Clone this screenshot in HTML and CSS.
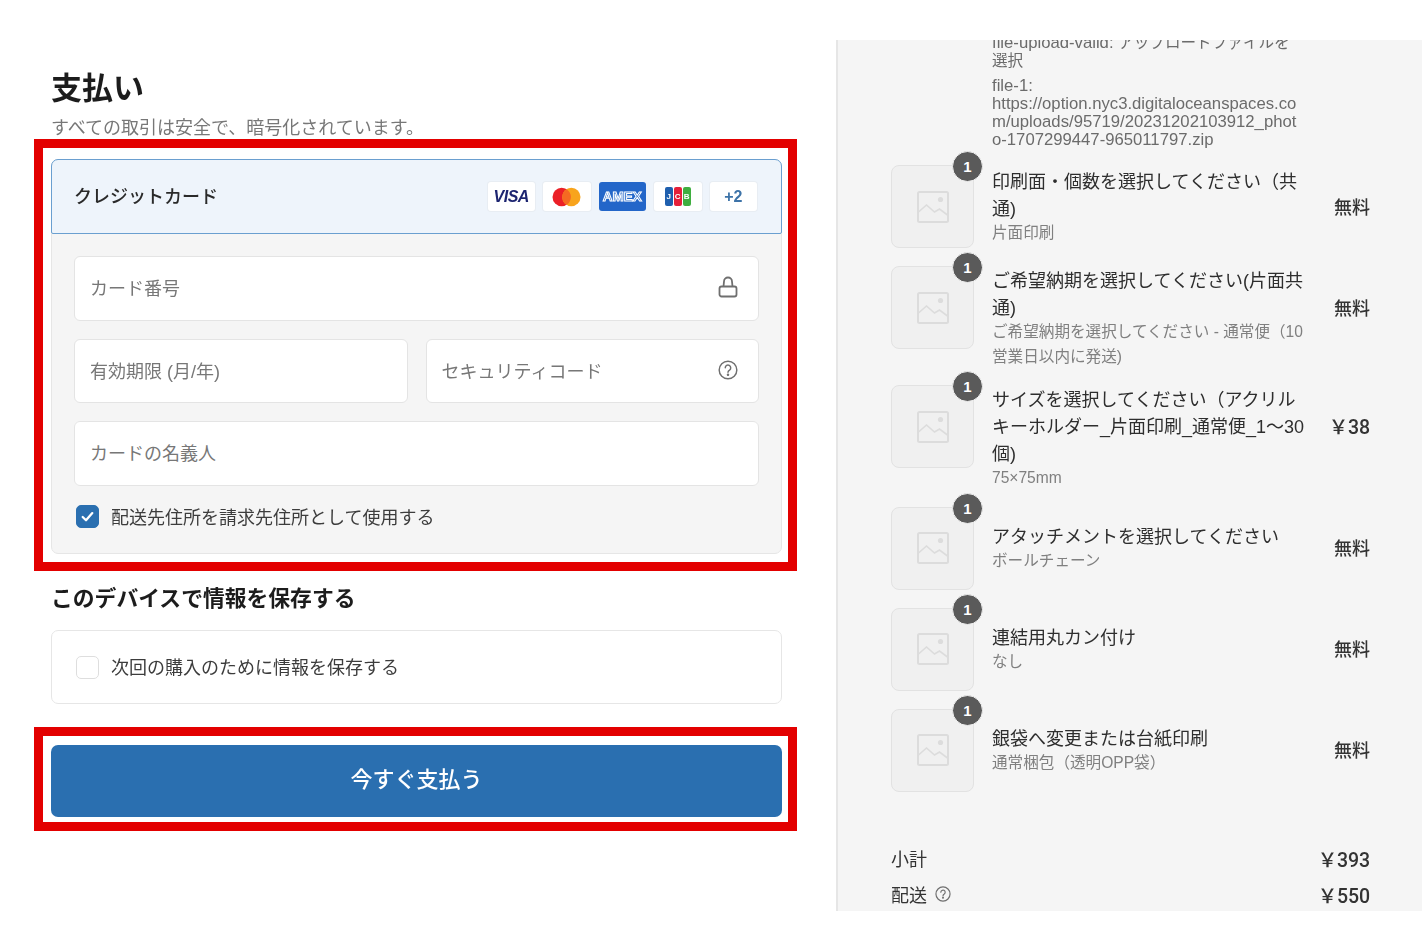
FILE: index.html
```html
<!DOCTYPE html>
<html lang="ja">
<head>
<meta charset="utf-8">
<title>支払い</title>
<link rel="stylesheet" href="styles.css">
</head>
<body>
<div class="page">
  <main class="checkout">
    <h1 class="title">支払い</h1>
    <p class="subtitle">すべての取引は安全で、暗号化されています。</p>

    <div class="highlight highlight-card">
      <section class="panel">
        <header class="panel-head">
          <span class="panel-name">クレジットカード</span>
          <div class="brands">
            <span class="brand"><span class="visa">VISA</span></span>
            <span class="brand">
              <svg class="mc" viewBox="0 0 30 20"><circle cx="10" cy="10" r="9.5" fill="#eb2027"/><circle cx="20" cy="10" r="9.5" fill="#f8a41c"/><path d="M15 1.9a9.5 9.5 0 0 1 0 16.2a9.5 9.5 0 0 1 0-16.2z" fill="#f56a22"/></svg>
            </span>
            <span class="brand brand-amex"><span class="amex">AMEX</span></span>
            <span class="brand">
              <span class="jcb"><i class="jcb-j">J</i><i class="jcb-c">C</i><i class="jcb-b">B</i></span>
            </span>
            <span class="brand brand-more">+2</span>
          </div>
        </header>
        <div class="panel-body">
          <div class="field">
            <span class="placeholder">カード番号</span>
            <svg class="field-icon" viewBox="0 0 20 22" fill="none" stroke="#6f6f6f" stroke-width="1.8"><path d="M5.5 10.5L6 5.5a4 4 0 0 1 8 0l.5 5"/><rect x="1.5" y="10.5" width="17" height="10" rx="2"/></svg>
          </div>
          <div class="field-row">
            <div class="field"><span class="placeholder">有効期限 (月/年)</span></div>
            <div class="field">
              <span class="placeholder">セキュリティコード</span>
              <svg class="field-icon" viewBox="0 0 22 22" fill="none" stroke="#6f6f6f" stroke-width="1.6"><circle cx="11" cy="11" r="9.7"/><path d="M8 8.6a3 3 0 1 1 4.7 2.5c-1.1.7-1.7 1.3-1.7 2.5" stroke-linecap="round"/><circle cx="11" cy="16.3" r=".6" fill="#6f6f6f"/></svg>
            </div>
          </div>
          <div class="field"><span class="placeholder">カードの名義人</span></div>
          <label class="check-row">
            <span class="check check-on">
              <svg viewBox="0 0 24 24" fill="none" stroke="#fff" stroke-width="2.6" stroke-linecap="round" stroke-linejoin="round"><path d="M6.5 12.5l3.8 3.8 7.2-8.2"/></svg>
            </span>
            <span class="check-text">配送先住所を請求先住所として使用する</span>
          </label>
        </div>
      </section>
    </div>

    <h2 class="section-title">このデバイスで情報を保存する</h2>
    <label class="save-box">
      <span class="check"></span>
      <span class="check-text">次回の購入のために情報を保存する</span>
    </label>

    <div class="highlight highlight-button">
      <button class="pay" type="button">今すぐ支払う</button>
    </div>
  </main>

  <aside class="summary">
    <div class="upload-meta">
      <p>file-upload-valid: <span class="meta-ja">アップロードファイルを選択</span></p>
      <p>file-1:<br>https://option.nyc3.digitaloceanspaces.com/uploads/95719/20231202103912_photo-1707299447-965011797.zip</p>
    </div>

    <ul class="items">
      <li class="item">
        <div class="thumb"><svg class="thumb-icon" viewBox="0 0 32 32"><use href="#ph"/></svg><span class="badge">1</span></div>
        <div class="item-text"><div class="item-name">印刷面・個数を選択してください&#xFF08;共通)</div><div class="item-sub">片面印刷</div></div>
        <div class="item-price">無料</div>
      </li>
      <li class="item">
        <div class="thumb"><svg class="thumb-icon" viewBox="0 0 32 32"><use href="#ph"/></svg><span class="badge">1</span></div>
        <div class="item-text"><div class="item-name">ご希望納期を選択してください(片面共通)</div><div class="item-sub">ご希望納期を選択してください - 通常便&#xFF08;10営業日以内に発送)</div></div>
        <div class="item-price">無料</div>
      </li>
      <li class="item">
        <div class="thumb"><svg class="thumb-icon" viewBox="0 0 32 32"><use href="#ph"/></svg><span class="badge">1</span></div>
        <div class="item-text"><div class="item-name">サイズを選択してください&#xFF08;アクリルキーホルダー_片面印刷_通常便_1〜30個)</div><div class="item-sub">75×75mm</div></div>
        <div class="item-price item-price-amount">&#xFFE5;38</div>
      </li>
      <li class="item">
        <div class="thumb"><svg class="thumb-icon" viewBox="0 0 32 32"><use href="#ph"/></svg><span class="badge">1</span></div>
        <div class="item-text"><div class="item-name">アタッチメントを選択してください</div><div class="item-sub">ボールチェーン</div></div>
        <div class="item-price">無料</div>
      </li>
      <li class="item">
        <div class="thumb"><svg class="thumb-icon" viewBox="0 0 32 32"><use href="#ph"/></svg><span class="badge">1</span></div>
        <div class="item-text"><div class="item-name">連結用丸カン付け</div><div class="item-sub">なし</div></div>
        <div class="item-price">無料</div>
      </li>
      <li class="item">
        <div class="thumb"><svg class="thumb-icon" viewBox="0 0 32 32"><use href="#ph"/></svg><span class="badge">1</span></div>
        <div class="item-text"><div class="item-name">銀袋へ変更または台紙印刷</div><div class="item-sub">通常梱包&#xFF08;透明OPP袋&#xFF09;</div></div>
        <div class="item-price">無料</div>
      </li>
    </ul>

    <dl class="totals">
      <div class="total-row"><dt>小計</dt><dd>&#xFFE5;393</dd></div>
      <div class="total-row"><dt>配送
        <svg class="total-help" viewBox="0 0 22 22" fill="none" stroke="#6f6f6f" stroke-width="1.6"><circle cx="11" cy="11" r="9.7"/><path d="M8 8.6a3 3 0 1 1 4.7 2.5c-1.1.7-1.7 1.3-1.7 2.5" stroke-linecap="round"/><circle cx="11" cy="16.3" r=".6" fill="#6f6f6f"/></svg>
      </dt><dd>&#xFFE5;550</dd></div>
    </dl>
  </aside>
</div>

<svg class="sprite" aria-hidden="true">
  <symbol id="ph" viewBox="0 0 32 32">
    <rect x="1" y="1" width="30" height="30" rx="1.5" fill="none" stroke="#dcdcdc" stroke-width="2"/>
    <path d="M1.5 21l8-7 8 7 5-3 8 6" fill="none" stroke="#dcdcdc" stroke-width="1.6"/>
    <circle cx="23.5" cy="8.5" r="2.6" fill="#dcdcdc"/>
  </symbol>
</svg>
</body>
</html>
```

FILE: styles.css
```css
* { box-sizing: border-box; }

html, body { margin: 0; padding: 0; }

body {
  background: #fff;
  color: #2a2a2a;
  font-family: "Liberation Sans", "Noto Sans CJK JP", sans-serif;
}

.sprite { display: none; }

.page {
  display: grid;
  grid-template-columns: 836px 586px;
  width: 1422px;
  height: 952px;
  overflow: hidden;
  filter: blur(0.35px);
}

/* left column */
.checkout { padding: 69px 0 0 34px; }

.title {
  margin: 0 0 0 17px;
  font-size: 31px;
  line-height: 40px;
  font-weight: 700;
  color: #1c1c1c;
}

.subtitle {
  margin: 8px 0 0 17px;
  font-size: 18px;
  line-height: 22px;
  color: #777;
}

.highlight {
  width: 763px;
  border: 9px solid #e30000;
}

.highlight-card { padding: 11px 6px 8px 8px; }

.highlight-button { margin-top: 23px; padding: 9px 6px 5px 8px; }

.panel {
  background: #f5f5f5;
  border: 1px solid #e6e6e6;
  border-radius: 7px;
}

.panel-head {
  display: flex;
  align-items: center;
  justify-content: space-between;
  height: 75px;
  margin: -1px -1px 0;
  padding: 0 24px 0 22px;
  background: #eef4fb;
  border: 1.5px solid #6a9fd0;
  border-radius: 7px 7px 2px 2px;
}

.panel-name { padding-bottom: 4px; font-size: 18px; font-weight: 500; color: #2a2a2a; }

.brands { display: flex; gap: 8px; }

.brand {
  display: flex;
  align-items: center;
  justify-content: center;
  width: 47.5px;
  height: 29px;
  background: #fff;
  border-radius: 3px;
  box-shadow: 0 0 0 1px #e8edf3;
}

.brand-amex { background: #2366c9; box-shadow: none; }

.brand-more { font-size: 16px; font-weight: 700; color: #3d73a8; }

.visa {
  font-size: 16px;
  font-weight: 700;
  font-style: italic;
  letter-spacing: -0.5px;
  color: #1c2470;
}

.amex {
  font-size: 13.5px;
  font-weight: 700;
  color: #2366c9;
  -webkit-text-stroke: 1px #fff;
}

.mc { width: 29px; height: 20px; }

.jcb { display: flex; gap: 1px; }

.jcb i {
  display: block;
  width: 8px;
  height: 19px;
  border-radius: 2px;
  font-size: 8px;
  font-weight: 700;
  font-style: normal;
  line-height: 19px;
  text-align: center;
  color: #fff;
}

.jcb-j { background: #1f5fae; }
.jcb-c { background: #e5203a; }
.jcb-b { background: #3fae3f; }

.panel-body {
  display: flex;
  flex-direction: column;
  gap: 18px;
  height: 319px;
  padding: 22px 22px 0;
}

.field {
  display: flex;
  align-items: center;
  justify-content: space-between;
  height: 64.5px;
  padding: 0 20px 2px 15px;
  background: #fff;
  border: 1.5px solid #e4e4e4;
  border-radius: 6px;
}

.field-row { display: grid; grid-template-columns: 1fr 1fr; gap: 18px; }

.placeholder { font-size: 18px; color: #777; }

.field-icon { width: 20px; height: 22px; }

.check-row {
  display: flex;
  align-items: center;
  gap: 12px;
  margin: -0.5px 0 0 2px;
}

.check {
  flex: none;
  width: 23px;
  height: 23px;
  background: #fff;
  border: 1.5px solid #dedede;
  border-radius: 5px;
}

.check-on { background: #2a6fb0; border-color: #2a6fb0; }

.check-on svg { display: block; width: 100%; height: 100%; }

.check-text { padding-bottom: 2px; font-size: 18px; color: #3c3c3c; }

.check-row .check-text { padding-bottom: 0; }

.section-title {
  margin: 15px 0 0 17px;
  font-size: 21.8px;
  line-height: 26px;
  font-weight: 700;
  color: #1c1c1c;
}

.save-box {
  display: flex;
  align-items: center;
  gap: 12px;
  width: 731px;
  height: 74px;
  margin: 18px 0 0 17px;
  padding-left: 24px;
  background: #fff;
  border: 1.5px solid #e6e6e6;
  border-radius: 7px;
}

.pay {
  display: block;
  width: 731px;
  height: 72px;
  padding: 0 0 8px;
  border: 0;
  border-radius: 7px;
  background: #2a6fb0;
  color: #fff;
  font: inherit;
  font-size: 22px;
  font-weight: 500;
}

/* right column */
.summary {
  height: 871px;
  margin-top: 40px;
  padding: 0 52px 0 53px;
  overflow: hidden;
  background: #f5f5f5;
  border-left: 2px solid #e6e6e6;
}

.upload-meta {
  width: 313px;
  margin: -6px 0 0 101px;
  font-size: 16.7px;
  line-height: 18px;
  color: #6b6b6b;
  word-break: break-all;
}

.upload-meta p { margin: 0 0 7px; }

.meta-ja { font-size: 15.6px; }

.items {
  display: flex;
  flex-direction: column;
  gap: 18px;
  margin: 16px 0 0;
  padding: 0;
  list-style: none;
}

.item { display: flex; align-items: flex-start; }

.thumb {
  position: relative;
  display: flex;
  align-items: center;
  justify-content: center;
  flex: none;
  width: 83px;
  height: 83px;
  background: #f0f0f0;
  border: 1.5px solid #e2e2e2;
  border-radius: 8px;
}

.thumb-icon { width: 32px; height: 32px; }

.badge {
  position: absolute;
  top: -15px;
  right: -10px;
  display: flex;
  align-items: center;
  justify-content: center;
  width: 31px;
  height: 31px;
  border-radius: 50%;
  background: #5a5a5a;
  border: 1.5px solid #eee;
  color: #fff;
  font-size: 15px;
  font-weight: 700;
}

.item-text {
  display: flex;
  flex-direction: column;
  justify-content: center;
  width: 315px;
  min-height: 83px;
  margin: 0 0 -2px 18px;
  padding-top: 2px;
}

.item-name { font-size: 18px; line-height: 27px; color: #2e2e2e; }

.item-sub { margin-top: -2px; font-size: 15.6px; line-height: 24.5px; color: #808080; }

.item-price {
  display: flex;
  align-items: center;
  justify-content: flex-end;
  flex: 1;
  height: 83px;
  padding-bottom: 2px;
  font-family: "Roboto", "Noto Sans CJK JP", sans-serif;
  font-size: 18px;
  font-weight: 500;
  color: #333;
}

.item-price-amount { font-size: 19.5px; letter-spacing: -0.1px; }

.totals { margin: 50px 0 0; }

.total-row {
  display: flex;
  justify-content: space-between;
  align-items: center;
  height: 36px;
  font-size: 18px;
  color: #333;
}

.total-row dt, .total-row dd { margin: 0; }

.total-row dt { display: flex; align-items: center; gap: 8px; padding-bottom: 3px; }

.total-row dd {
  padding-bottom: 2px;
  font-family: "Roboto", "Noto Sans CJK JP", sans-serif;
  font-size: 19.5px;
  font-weight: 500;
  letter-spacing: -0.1px;
}

.total-help { width: 16px; height: 16px; }
```
